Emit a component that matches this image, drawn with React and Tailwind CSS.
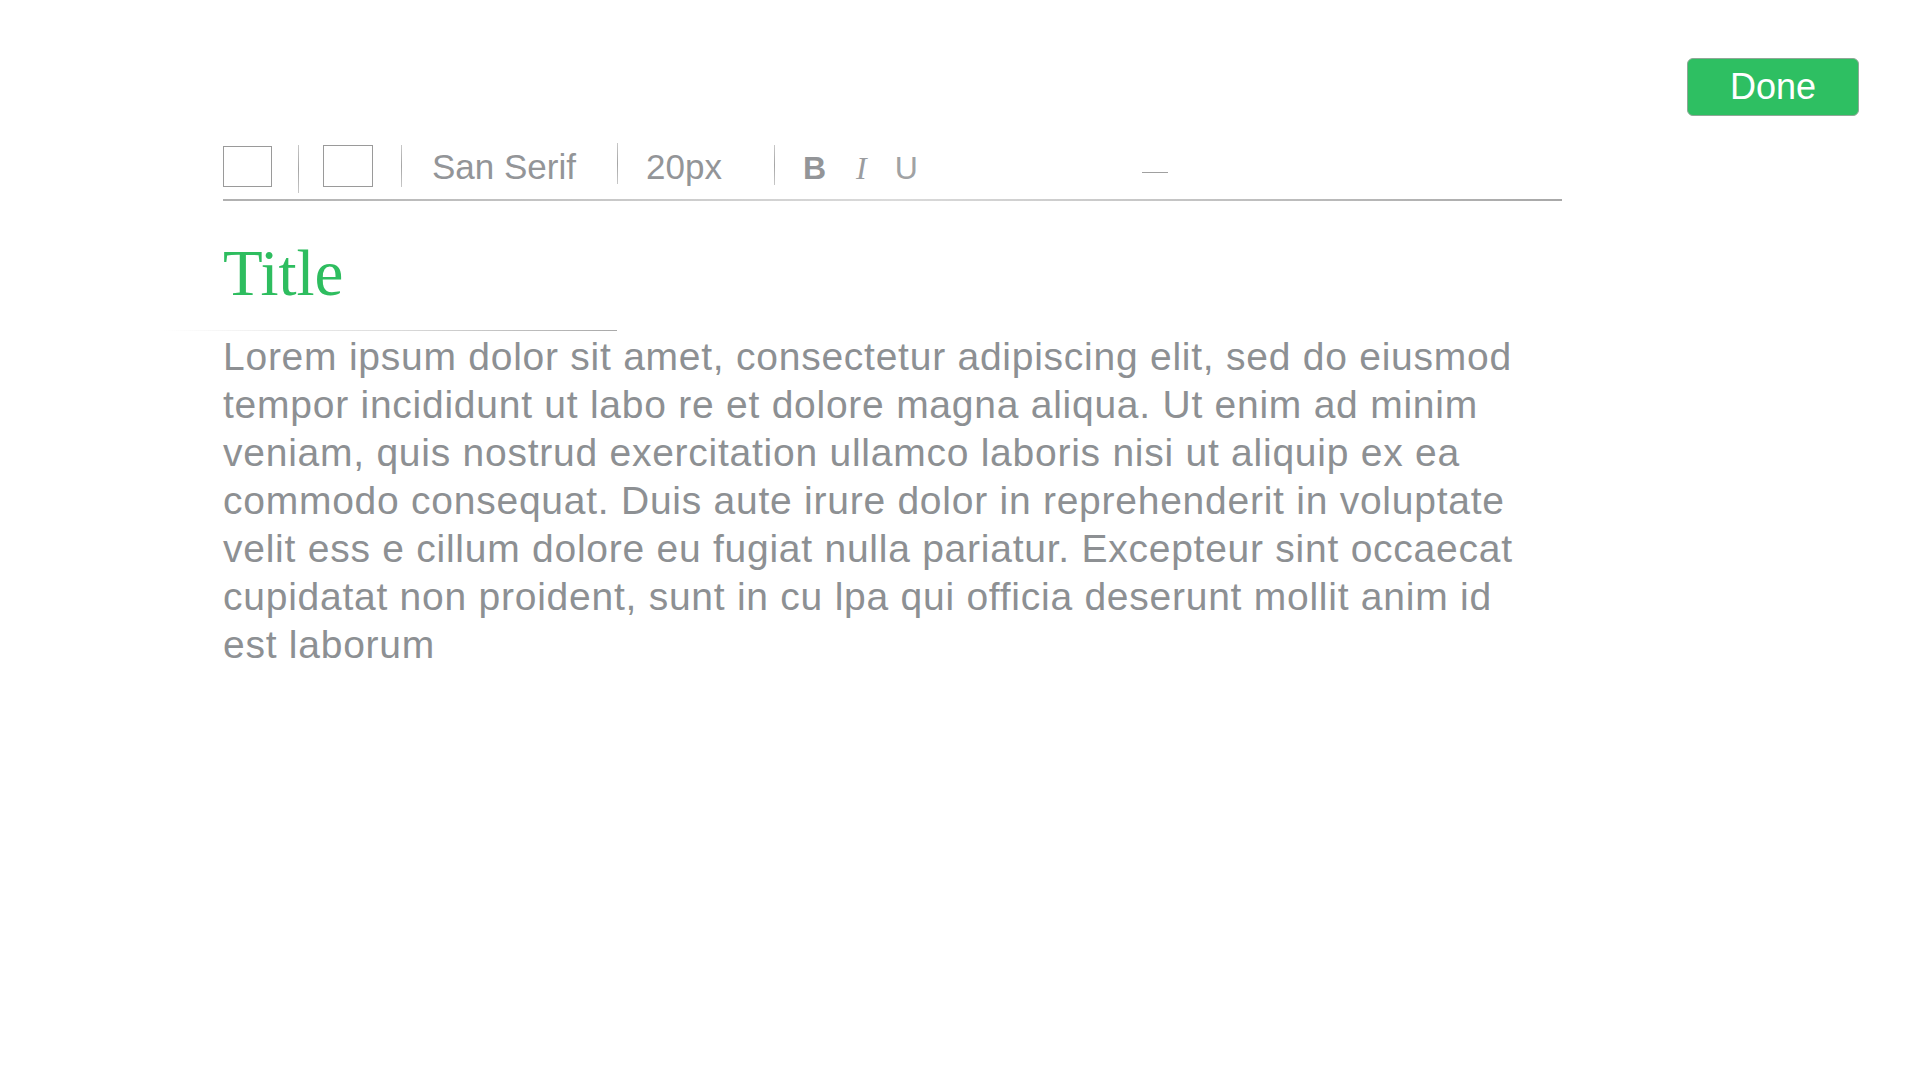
const lines = [
  "Lorem ipsum dolor sit amet, consectetur adipiscing elit, sed do eiusmod",
  "tempor incididunt ut labo re et dolore magna aliqua. Ut enim ad minim",
  "veniam, quis nostrud exercitation ullamco laboris nisi ut aliquip ex ea",
  "commodo consequat. Duis aute irure dolor in reprehenderit in voluptate",
  "velit ess e cillum dolore eu fugiat nulla pariatur. Excepteur sint occaecat",
  "cupidatat non proident, sunt in cu lpa qui officia deserunt mollit anim id",
  "est laborum",
];

const Divider = ({ className }) => (
  <div className={`w-px bg-gradient-to-b from-[#c8c8c8] via-[#a5a5a5] to-[#c8c8c8] ${className}`} />
);

const Toolbar = () => (
  <div className="w-[1339px]">
    <div className="flex items-start h-[50px] text-[#939598] font-['Liberation_Sans',Arial,sans-serif]">
      <div className="mt-[3px] w-[49px] h-[41px] border border-[#9a9a9a]" />
      <Divider className="ml-[26px] mt-[2px] h-[48px]" />
      <div className="ml-[24px] mt-[2px] w-[50px] h-[42px] border border-[#9a9a9a]" />
      <Divider className="ml-[28px] mt-[2px] h-[42px]" />
      <span className="ml-[30px] mt-[6px] w-[185px] text-[35px] leading-none">San Serif</span>
      <Divider className="h-[41px]" />
      <span className="ml-[28px] mt-[6px] w-[128px] text-[35px] leading-none">20px</span>
      <Divider className="mt-[2px] h-[40px]" />
      <span className="ml-[28px] mt-[9px] text-[32px] leading-none font-bold">B</span>
      <span className="ml-[30px] mt-[9px] text-[32px] leading-none italic font-['Liberation_Serif',serif] text-[#9a9c9f]">
        I
      </span>
      <span className="ml-[28px] mt-[9px] text-[32px] leading-none text-[#a0a2a4]">U</span>
      <div className="ml-[224px] mt-[29px] w-[26px] h-px bg-[#a0a0a0]" />
    </div>
    <div className="mt-[6px] h-[2px] bg-gradient-to-r from-[#b0b0b0] via-[#dadada] to-[#a8a8a8]" />
  </div>
);

export default function App() {
  return (
    <div className="w-[1920px] h-[1080px] bg-white overflow-hidden">
      <div className="flex justify-end pt-[58px] pr-[61px]">
        <button className="w-[172px] h-[58px] rounded-[6px] bg-[#2ebf62] border border-[#8fa897] text-white text-[36px] leading-none font-['Liberation_Sans',Arial,sans-serif]">
          Done
        </button>
      </div>
      <div className="pl-[223px] mt-[27px]">
        <Toolbar />
        <h1 className="mt-[40px] text-[65px] leading-none text-[#2ebd5f] font-['Liberation_Serif',Georgia,serif]">
          Title
        </h1>
        <div className="-ml-[60px] mt-[24px] w-[454px] h-px bg-gradient-to-r from-white via-[#dcdcdc] to-[#a9a9a9]" />
        <p className="mt-[2px] text-[39px] leading-[48px] text-[#8d9093] font-['Liberation_Sans',Arial,sans-serif] tracking-[0.75px]">
          {lines.map((l, i) => (
            <span key={i} className="block whitespace-nowrap">
              {l}
            </span>
          ))}
        </p>
      </div>
    </div>
  );
}
